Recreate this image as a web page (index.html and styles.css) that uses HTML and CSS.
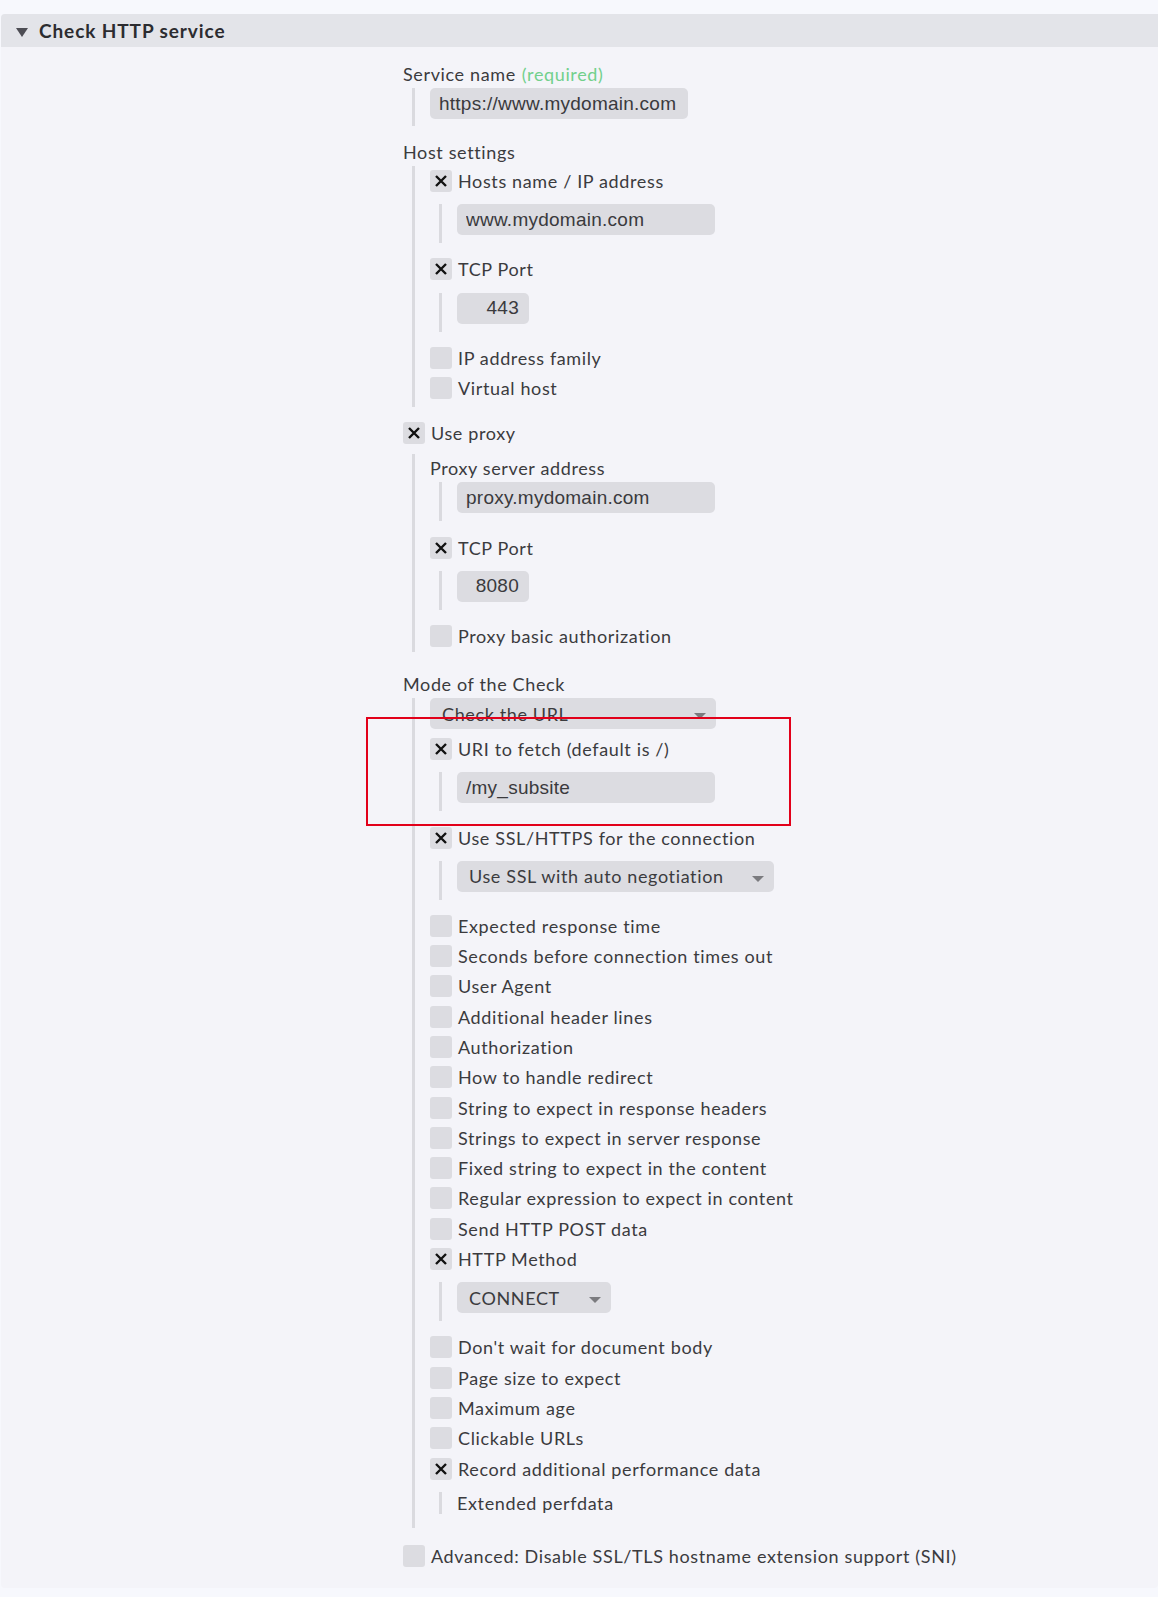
FILE: index.html
```html
<!DOCTYPE html>
<html lang="en">
  <head>
    <meta charset="utf-8">
    <title>Check HTTP service</title>
    <link rel="stylesheet" href="styles.css">
  </head>
  <body>

  <div class="foldable">
    <div class="foldable-head"><span class="treeangle"></span>Check HTTP service</div>

    <div class="foldable-body">

      <div class="title">Service name <span class="required">(required)</span></div>
      <div class="nest first pb7">
        <input class="text" type="text" value="https://www.mydomain.com">
      </div>

      <div class="title gap">Host settings</div>
      <div class="nest first pb4">
        <div class="row"><span class="cb on"><svg viewBox="0 0 12 12"><path d="M1 1L11 11M11 1L1 11"/></svg></span>Hosts name / IP address</div>
        <div class="nest">
          <input class="text" type="text" value="www.mydomain.com">
        </div>
        <div class="row"><span class="cb on"><svg viewBox="0 0 12 12"><path d="M1 1L11 11M11 1L1 11"/></svg></span>TCP Port</div>
        <div class="nest">
          <input class="text port" type="text" value="443">
        </div>
        <div class="row"><span class="cb"></span>IP address family</div>
        <div class="row"><span class="cb"></span>Virtual host</div>
      </div>

      <div class="row proxy-row"><span class="cb on"><svg viewBox="0 0 12 12"><path d="M1 1L11 11M11 1L1 11"/></svg></span>Use proxy</div>
      <div class="nest proxy pb1">
        <div class="title">Proxy server address</div>
        <div class="nest first">
          <input class="text" type="text" value="proxy.mydomain.com">
        </div>
        <div class="row"><span class="cb on"><svg viewBox="0 0 12 12"><path d="M1 1L11 11M11 1L1 11"/></svg></span>TCP Port</div>
        <div class="nest">
          <input class="text port" type="text" value="8080">
        </div>
        <div class="row"><span class="cb"></span>Proxy basic authorization</div>
      </div>

      <div class="title gap mode">Mode of the Check</div>
      <div class="nest first pb14">
        <div class="select w-mode">Check the URL</div>
        <div class="row after-select"><span class="cb on"><svg viewBox="0 0 12 12"><path d="M1 1L11 11M11 1L1 11"/></svg></span>URI to fetch (default is /)</div>
        <div class="nest">
          <input class="text" type="text" value="/my_subsite">
        </div>
        <div class="row"><span class="cb on"><svg viewBox="0 0 12 12"><path d="M1 1L11 11M11 1L1 11"/></svg></span>Use SSL/HTTPS for the connection</div>
        <div class="nest">
          <div class="select w-ssl">Use SSL with auto negotiation</div>
        </div>
        <div class="row"><span class="cb"></span>Expected response time</div>
        <div class="row"><span class="cb"></span>Seconds before connection times out</div>
        <div class="row"><span class="cb"></span>User Agent</div>
        <div class="row"><span class="cb"></span>Additional header lines</div>
        <div class="row"><span class="cb"></span>Authorization</div>
        <div class="row"><span class="cb"></span>How to handle redirect</div>
        <div class="row"><span class="cb"></span>String to expect in response headers</div>
        <div class="row"><span class="cb"></span>Strings to expect in server response</div>
        <div class="row"><span class="cb"></span>Fixed string to expect in the content</div>
        <div class="row"><span class="cb"></span>Regular expression to expect in content</div>
        <div class="row"><span class="cb"></span>Send HTTP POST data</div>
        <div class="row"><span class="cb on"><svg viewBox="0 0 12 12"><path d="M1 1L11 11M11 1L1 11"/></svg></span>HTTP Method</div>
        <div class="nest">
          <div class="select w-method">CONNECT</div>
        </div>
        <div class="row"><span class="cb"></span>Don't wait for document body</div>
        <div class="row"><span class="cb"></span>Page size to expect</div>
        <div class="row"><span class="cb"></span>Maximum age</div>
        <div class="row"><span class="cb"></span>Clickable URLs</div>
        <div class="row"><span class="cb on"><svg viewBox="0 0 12 12"><path d="M1 1L11 11M11 1L1 11"/></svg></span>Record additional performance data</div>
        <div class="nest pb0">
          <div class="plain">Extended perfdata</div>
        </div>
      </div>

      <div class="row gap"><span class="cb"></span>Advanced: Disable SSL/TLS hostname extension support (SNI)</div>

    </div>
  </div>

  <div class="highlight"></div>

  </body>
</html>
```

FILE: styles.css
```css
html {
  height: 100%;
}
body {
  margin: 0;
  padding: 0;
  background: #f7f8fd;
  color: #3b3b3e;
  font-family: Lato, "Noto Sans", sans-serif;
  font-size: 18px;
  letter-spacing: 0.63px;
}

.foldable {
  margin: 14px 0 0 1px;
  background: #f4f4f9;
  border-radius: 4px;
}

.foldable-head {
  display: flex;
  align-items: center;
  height: 33px;
  padding-left: 15px;
  background: #e3e4e9;
  border-radius: 4px 0 0 0;
  color: #2c2c30;
  font-size: 19px;
  font-weight: bold;
  letter-spacing: 0.9px;
}

.treeangle {
  width: 0;
  height: 0;
  margin: 3px 11px 0 0;
  border-left: 6px solid transparent;
  border-right: 6px solid transparent;
  border-top: 9px solid #4d4d54;
}

.foldable-body {
  padding: 13px 0 17px 402px;
}

.title {
  display: flex;
  align-items: center;
  height: 28px;
}
.title.gap {
  margin-top: 12px;
}
.title.mode {
  margin-top: 18px;
}

.required {
  margin-left: 6px;
  color: #72d08c;
}

.row {
  display: flex;
  align-items: center;
  gap: 6px;
  height: 30.3px;
  white-space: nowrap;
}
.nest + .row {
  margin-top: 11px;
}
.row.gap {
  margin-top: 13px;
}
.nest + .row.proxy-row {
  margin-top: 11px;
}
.row.after-select {
  margin-top: 5px;
}

.cb {
  flex: none;
  display: flex;
  align-items: center;
  justify-content: center;
  width: 22px;
  height: 22px;
  border-radius: 3px;
  background: #dcdce1;
}
.cb svg {
  width: 12px;
  height: 12px;
  fill: none;
  stroke: #111;
  stroke-width: 2.4;
}

.nest {
  margin: 8px 0 0 9px;
  padding: 0 0 8px 15px;
  border-left: 3px solid #dadadf;
}
.nest.first {
  margin-top: 0;
}
.nest.proxy {
  margin-top: 6px;
}
.nest.pb0 { padding-bottom: 0; }
.nest.pb1 { padding-bottom: 1px; }
.nest.pb4 { padding-bottom: 4px; }
.nest.pb7 { padding-bottom: 7px; }
.nest.pb14 { padding-bottom: 14px; }

.text {
  display: block;
  box-sizing: border-box;
  width: 258px;
  height: 31px;
  margin: 0;
  padding: 0 9px;
  border: 0;
  border-radius: 5px;
  background: #dcdce1;
  color: #3a3a3d;
  font-family: "Liberation Sans", Arial, sans-serif;
  font-size: 19px;
  letter-spacing: 0.25px;
  outline: none;
}
.text.port {
  width: 72px;
  padding-right: 10px;
  text-align: right;
}

.select {
  position: relative;
  display: flex;
  align-items: center;
  box-sizing: border-box;
  height: 31px;
  padding-left: 12px;
  border-radius: 5px;
  background: #dcdce1;
  white-space: nowrap;
}
.select::after {
  content: "";
  position: absolute;
  right: 10px;
  top: 15px;
  border-left: 6px solid transparent;
  border-right: 6px solid transparent;
  border-top: 6px solid #7b7b7f;
}
.w-mode { width: 286px; }
.w-ssl { width: 317px; }
.w-method { width: 154px; }

.plain {
  height: 22px;
  line-height: 22px;
}

.highlight {
  position: absolute;
  left: 366px;
  top: 717px;
  width: 425px;
  height: 109px;
  box-sizing: border-box;
  border: 2px solid #e2001a;
}
```
